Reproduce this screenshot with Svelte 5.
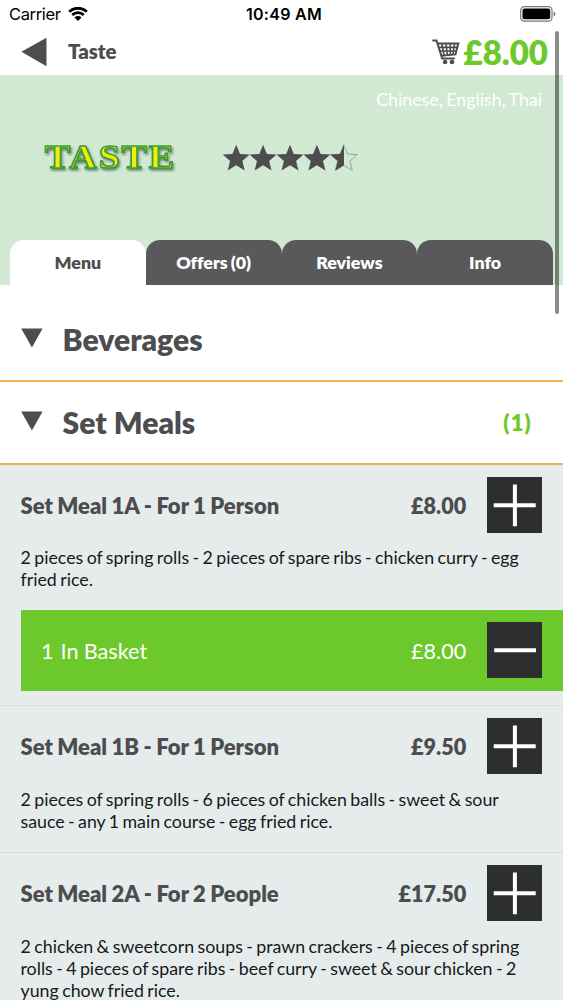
<script>
  const tabs = ['Menu', 'Offers (0)', 'Reviews', 'Info'];
  const categories = [
    { name: 'Beverages', count: '' },
    { name: 'Set Meals', count: '(1)' }
  ];
  const meals = [
    {
      name: 'Set Meal 1A - For 1 Person',
      price: '£8.00',
      text: ['2 pieces of spring rolls - 2 pieces of spare ribs - chicken curry - egg', 'fried rice.'],
      basket: 1
    },
    {
      name: 'Set Meal 1B - For 1 Person',
      price: '£9.50',
      text: ['2 pieces of spring rolls - 6 pieces of chicken balls - sweet & sour', 'sauce - any 1 main course - egg fried rice.'],
      basket: 0
    },
    {
      name: 'Set Meal 2A - For 2 People',
      price: '£17.50',
      text: ['2 chicken & sweetcorn soups - prawn crackers - 4 pieces of spring', 'rolls - 4 pieces of spare ribs - beef curry - sweet & sour chicken - 2', 'yung chow fried rice.'],
      basket: 0
    }
  ];
  const star = 'M13.2 -0.3 L17 9.1 L26.7 9.6 L19.3 16 L21.7 25.5 L13.2 20.3 L4.7 25.5 L7.1 16 L-0.3 9.6 L9.4 9.1 Z';
  const halfStar = 'M13.4 -0.3 L9.4 9.1 L-0.3 9.6 L7.1 16 L4.7 25.5 L13.4 20.3 Z';
</script>

<div class="screen">
  <div class="status">
    <div class="carrier">
      <span>Carrier</span>
      <svg width="20" height="14" viewBox="0 0 20 14">
        <path d="M1.2 4.8 A12.7 12.7 0 0 1 18.8 4.8" fill="none" stroke="#000" stroke-width="2.9" />
        <path d="M4.2 8 A8.3 8.3 0 0 1 15.8 8" fill="none" stroke="#000" stroke-width="2.6" />
        <path d="M6.5 10.5 A5 5 0 0 1 13.5 10.5 L10 14 Z" />
      </svg>
    </div>
    <div class="time">10:49 AM</div>
    <svg class="battery" width="36" height="16" viewBox="0 0 36 16">
      <rect x="0.7" y="0.7" width="31.3" height="14.4" rx="3.7" fill="#fff" stroke="#777" stroke-width="1.2" />
      <rect x="2.5" y="2.6" width="27.7" height="10.7" rx="2" />
      <path d="M33.6 5.4 Q35.4 6 35.4 7.9 Q35.4 9.8 33.6 10.4 Z" fill="#777" />
    </svg>
  </div>

  <header>
    <svg class="back" width="26" height="30" viewBox="0 0 26 30"><path d="M0.4 14.8 L25.5 0.7 V29.3 Z" fill="#4d4d4d" /></svg>
    <span class="title">Taste</span>
    <svg class="cart" width="28" height="26" viewBox="0 0 28 26" fill="none" stroke="#4c4c4e">
      <path d="M0.3 1.5 H4.5 L10.2 19.5 H22.8" stroke-width="2" />
      <path d="M5.6 4.6 H26.3 L23.5 15.4 L9 16.8" stroke-width="2" />
      <path d="M6.7 8.4 H25.2 M7.8 12 H24.5 M9.8 4.5 L12 16 M14 4.5 L15.3 16 M18.3 4.5 V16 M22.5 4.5 L20.9 16" stroke-width="1.6" />
      <circle cx="13.1" cy="23" r="2.3" fill="#4c4c4e" stroke="none" />
      <circle cx="20" cy="23" r="2.3" fill="#4c4c4e" stroke="none" />
    </svg>
    <span class="total">£8.00</span>
  </header>

  <section class="hero">
    <div class="languages">Chinese, English, Thai</div>
    <div class="brand">
      <svg class="logo" width="150" height="48" viewBox="0 0 150 48">
        <text transform="translate(14 34.7) scale(1.115 1)">TASTE</text>
      </svg>
      <svg class="stars" width="136" height="27" viewBox="0 0 136 27">
        {#each [0, 1, 2, 3] as n}
          <path d={star} transform="translate({n * 26.9} 0)" fill="#4d4d4d" />
        {/each}
        <path d={star} transform="translate(107.6 0)" fill="none" stroke="#899488" stroke-width="0.8" />
        <path d={halfStar} transform="translate(107.6 0)" fill="#4d4d4d" />
      </svg>
    </div>
    <nav>
      {#each tabs as tab, i}
        <div class="tab" class:active={i === 0}>{tab}</div>
      {/each}
    </nav>
  </section>

  {#each categories as cat, i}
    <div class="category" class:first={i === 0}>
      <svg width="22" height="20" viewBox="0 0 22 20"><path d="M0.2 0.6 H21.6 L10.9 19.6 Z" fill="#4d4d4d" /></svg>
      <h2>{cat.name}</h2>
      <span class="count">{cat.count}</span>
    </div>
  {/each}

  <main>
    {#each meals as meal}
      <article>
        <div class="row">
          <h3>{meal.name}</h3>
          <span class="price">{meal.price}</span>
          <div class="button">
            <svg width="56" height="56" viewBox="0 0 56 56"><path d="M6.7 28.2 H48.7 M27.9 7.5 V49.3" stroke="#fff" stroke-width="4" /></svg>
          </div>
        </div>
        <p>{#each meal.text as line}<span>{line}</span>{/each}</p>
        {#if meal.basket}
          <div class="basket">
            <span class="qty">{meal.basket}</span>
            <span class="label">In Basket</span>
            <span class="price">{meal.price}</span>
            <div class="button">
              <svg width="56" height="56" viewBox="0 0 56 56"><path d="M7.2 28.2 H49" stroke="#fff" stroke-width="4" /></svg>
            </div>
          </div>
        {/if}
      </article>
    {/each}
  </main>
  <div class="scrollbar"></div>
</div>

<style>
  :global(body) { margin: 0; background: #fff; }
  .screen {
    position: relative;
    width: 563px;
    height: 1000px;
    overflow: hidden;
    background: #fff;
    color: #4d4d4f;
    font-family: Lato, sans-serif;
    white-space: nowrap;
  }
  svg { display: block; flex: none; }
  .status {
    box-sizing: border-box;
    height: 28px;
    padding: 0 7px 0 9px;
    display: grid;
    grid-template-columns: 1fr auto 1fr;
    align-items: center;
    color: #000;
    font: 16.5px Inter, sans-serif;
  }
  .carrier { display: flex; align-items: center; gap: 7px; letter-spacing: -0.35px; }
  .time { font-weight: 600; font-size: 16px; letter-spacing: 0.3px; padding-left: 3px; }
  .battery { justify-self: end; }
  header {
    box-sizing: border-box;
    height: 47px;
    display: flex;
    align-items: center;
    padding: 0 15px 0 21px;
  }
  .title { margin: -1px 0 0 21px; font-size: 20.4px; font-weight: 800; }
  .cart { margin-left: auto; }
  .total { margin-left: 4px; font-size: 33px; font-weight: 800; color: #6dc92b; }
  .hero {
    box-sizing: border-box;
    height: 210.4px;
    display: flex;
    flex-direction: column;
    background: #d2ead4;
  }
  .languages {
    padding: 13px 21px 0 0;
    text-align: right;
    font-size: 17.8px;
    line-height: 22px;
    word-spacing: -1px;
    color: #fff;
  }
  .brand { display: flex; align-items: flex-start; padding: 23px 0 0 31px; gap: 42px; }
  .stars { margin-top: 12px; overflow: visible; }
  .logo text {
    font: bold 34px "Liberation Serif", serif;
    letter-spacing: 1.7px;
    fill: #eded0e;
    stroke: #3d9b35;
    stroke-width: 1.5px;
    filter: drop-shadow(1.5px 2px 1.2px rgba(40, 80, 50, 0.65));
  }
  nav { display: flex; margin: auto 10px 0; }
  .tab {
    flex: 1;
    height: 45px;
    line-height: 44px;
    text-align: center;
    font-size: 17.8px;
    font-weight: 800;
    border-radius: 14px 14px 0 0;
    background: #59595b;
    color: #fff;
    word-spacing: -1px;
    font-variant-ligatures: none;
  }
  .tab.active { background: #fff; color: #4d4d4f; }
  .category {
    box-sizing: border-box;
    height: 83px;
    display: flex;
    align-items: center;
    padding: 0 31px 0 21px;
    border-bottom: 2px solid #f9ad4e;
  }
  .category.first { height: 96.6px; padding-top: 13.6px; }
  .category svg { margin-top: -3px; }
  h2 { margin: 0 0 0 19.6px; font-size: 30.1px; line-height: 36px; font-weight: 800; position: relative; top: -0.6px; }
  .count { margin-left: auto; font-size: 22px; font-weight: 800; letter-spacing: 1.2px; color: #6dc92b; }
  main { background: #e6eceb; }
  article { padding-top: 12px; border-bottom: 1px solid #d9dcdd; }
  .row, .basket { display: flex; align-items: center; padding-right: 20.6px; }
  .row { padding-left: 20.5px; }
  h3 { margin: 2px 0 0; font-size: 22px; line-height: 26px; font-weight: 800; word-spacing: -0.6px; }
  .price { margin-left: auto; font-size: 21.6px; font-weight: 700; }
  .row .price { font-weight: 800; margin-top: 2px; }
  .button { margin-left: 20.5px; width: 55.7px; height: 56px; background: #2d2f2e; overflow: hidden; }
  p {
    margin: 0;
    padding: 13.5px 0 20.5px 20.5px;
    font-size: 17.8px;
    line-height: 22px;
    word-spacing: -1.15px;
    color: #171919;
  }
  p span { display: block; }
  .basket {
    height: 81px;
    margin: -1px 0 14.5px 20.5px;
    padding-left: 20.5px;
    background: #6dc92b;
    color: #fff;
    font-size: 21.7px;
  }
  .basket .qty, .basket .label { margin-top: 1px; }
  .basket .label { margin-left: 7px; word-spacing: -0.5px; }
  .basket .price { font-weight: 400; margin-top: 1px; }
  .scrollbar {
    position: absolute;
    left: 555px;
    top: 31px;
    width: 4px;
    height: 283px;
    border-radius: 2px;
    background: rgba(0, 0, 0, 0.45);
  }
</style>
